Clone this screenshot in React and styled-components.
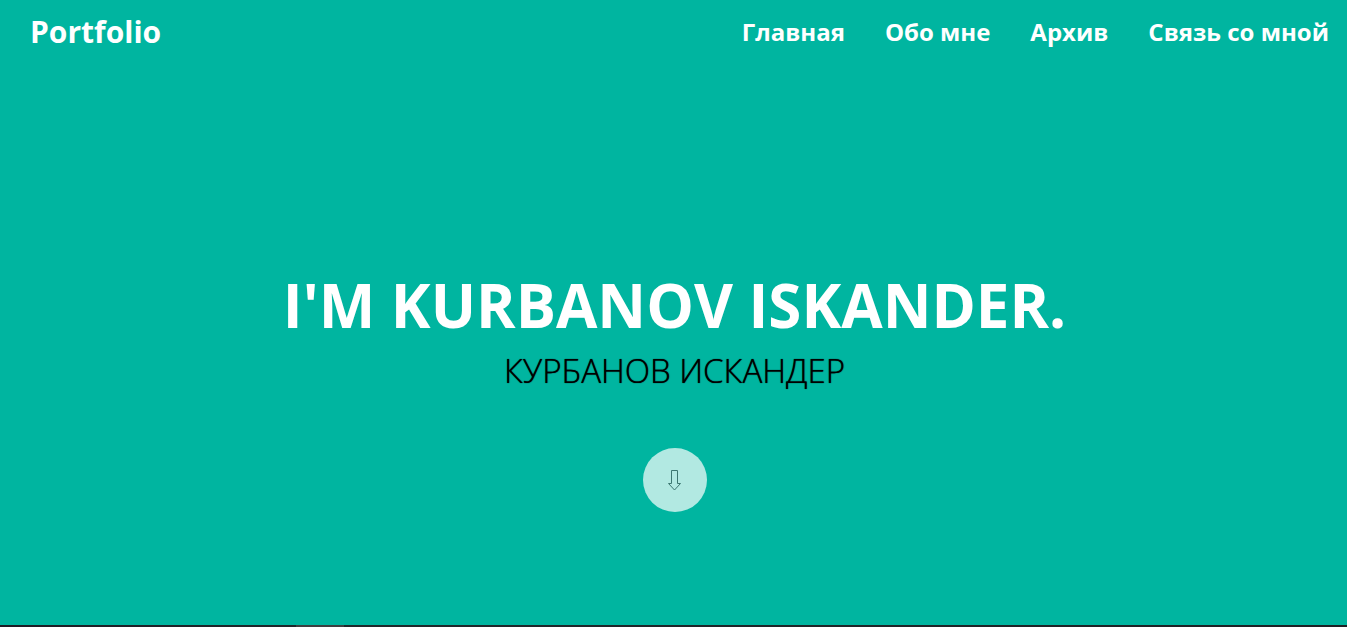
import React from "react";
import styled, { createGlobalStyle } from "styled-components";

const GlobalStyle = createGlobalStyle`
  * { box-sizing: border-box; }
  body {
    margin: 0;
    background: #00b5a0;
    font-family: "Open Sans", "Noto Sans", sans-serif;
  }
`;

const Page = styled.div`
  min-height: 100vh;
  display: flex;
  flex-direction: column;
`;

const Header = styled.header`
  display: flex;
  justify-content: space-between;
  align-items: center;
  height: 64px;
  padding: 0 18px 0 30px;
  color: #fff;
`;

const Logo = styled.a`
  font-size: 30px;
  font-weight: 700;
  line-height: 40px;
  color: inherit;
  text-decoration: none;
`;

const Nav = styled.nav`
  display: flex;
  gap: 40px;
`;

const NavLink = styled.a`
  font-size: 24px;
  font-weight: 700;
  line-height: 32px;
  color: inherit;
  text-decoration: none;
  white-space: nowrap;
`;

const Hero = styled.main`
  flex: 1;
  display: flex;
  flex-direction: column;
  align-items: center;
  justify-content: center;
  padding: 88px 0 0 2px;
  text-align: center;
`;

const Title = styled.h1`
  margin: 0;
  font-size: 60px;
  font-weight: 700;
  line-height: 80px;
  color: #fff;
  text-transform: uppercase;
`;

const Subtitle = styled.p`
  margin: 2px 0 53px;
  font-size: 33px;
  font-weight: 300;
  line-height: 48px;
  color: #000;
  text-shadow: 0 0 1px #000;
  text-transform: uppercase;
`;

const ScrollButton = styled.button`
  display: flex;
  align-items: center;
  justify-content: center;
  width: 64px;
  height: 64px;
  padding: 0;
  border: 0;
  border-radius: 50%;
  background: #b2e9e2;
  color: #3c7771;
  cursor: pointer;
`;

const NextSection = styled.div`
  height: 2px;
  background: linear-gradient(90deg, #1e1b24, #20282b 25%, #1e2024);
  padding-left: 22%;
`;

const NextSectionDetail = styled.div`
  width: 48px;
  height: 2px;
  background: #3d3f40;
`;

const links = ["Главная", "Обо мне", "Архив", "Связь со мной"];

export default function App() {
  return (
    <>
      <GlobalStyle />
      <Page>
        <Header>
          <Logo href="#">Portfolio</Logo>
          <Nav>
            {links.map((label) => (
              <NavLink key={label} href="#">{label}</NavLink>
            ))}
          </Nav>
        </Header>
        <Hero>
          <Title>I'm Kurbanov Iskander.</Title>
          <Subtitle>Курбанов Искандер</Subtitle>
          <ScrollButton type="button" aria-label="Вниз">
            <svg width="14" height="22" viewBox="0 0 14 22" fill="none" stroke="currentColor" strokeWidth="1">
              <path d="M3.5 1.5H9.5V14.5H12.5L6.5 21L0.5 14.5H3.5Z" />
            </svg>
          </ScrollButton>
        </Hero>
        <NextSection>
          <NextSectionDetail />
        </NextSection>
      </Page>
    </>
  );
}
